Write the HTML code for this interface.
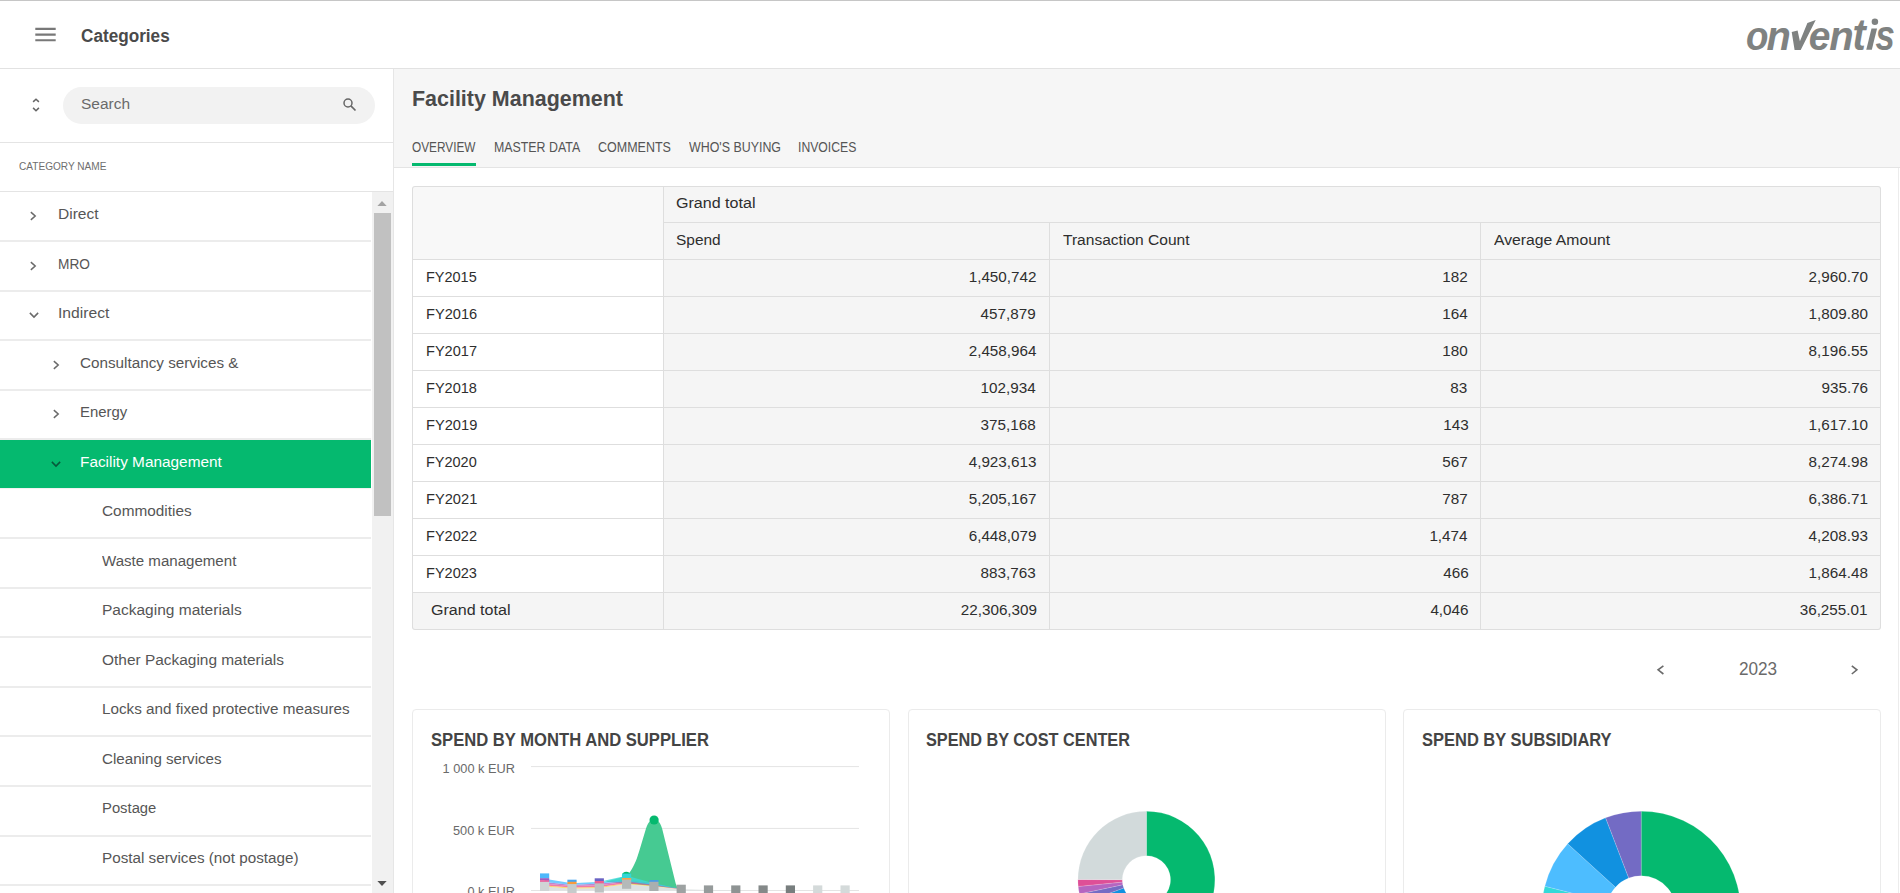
<!DOCTYPE html>
<html lang="en">
<head>
<meta charset="utf-8">
<title>Categories - Facility Management</title>
<style>
html,body{margin:0;padding:0;width:1900px;height:893px;overflow:hidden;background:#fff;}
#app{position:absolute;left:0;top:0;width:1900px;height:893px;overflow:hidden;background:#fff;font-family:"Liberation Sans",sans-serif;}
.a{position:absolute;}
.t{position:absolute;white-space:nowrap;line-height:1;display:block;}
.hl{position:absolute;height:1px;background:#e4e4e4;}
.vl{position:absolute;width:1px;background:#e4e4e4;}
.sep{position:absolute;left:0;width:371px;height:2px;background:#ececec;}
.cell{position:absolute;background:#f5f5f5;}
.card{position:absolute;top:709px;height:200px;border:1px solid #ebebeb;border-radius:4px;background:#fff;box-sizing:border-box;}
svg{position:absolute;overflow:visible;}
</style>
</head>
<body>
<div id="app">
<!-- top window line -->
<div class="a" style="left:0;top:0;width:1900px;height:1px;background:#c6c6c6;"></div>
<!-- header -->
<div class="hl" style="left:0;top:68px;width:1900px;background:#e2e2e2;"></div>
<svg style="left:35px;top:26px;" width="22" height="18" viewBox="0 0 22 18"><path d="M0.3 1.8 H20.7 V3.9 H0.3 Z M0.3 7.6 H20.7 V9.7 H0.3 Z M0.3 13.2 H20.7 V15.3 H0.3 Z" fill="#787878"/></svg>

<!-- sidebar -->
<div class="vl" style="left:393px;top:69px;height:824px;background:#e6e6e6;"></div>
<div class="hl" style="left:0;top:142px;width:393px;"></div>
<div class="a" style="left:63px;top:87px;width:312px;height:37px;border-radius:18.5px;background:#f2f2f2;"></div>
<svg style="left:30px;top:96px;" width="12" height="18" viewBox="0 0 12 18"><path d="M3.1 5.9 L6 3.2 L8.9 5.9 M3.1 11.9 L6 14.8 L8.9 11.9" fill="none" stroke="#666" stroke-width="1.5"/></svg>
<svg style="left:341px;top:96px;" width="18" height="18" viewBox="0 0 18 18"><circle cx="7.0" cy="7.0" r="4.0" fill="none" stroke="#666" stroke-width="1.5"/><path d="M9.9 9.9 L14.5 14.5" stroke="#666" stroke-width="1.7" fill="none"/></svg>
<div class="hl" style="left:0;top:191px;width:393px;"></div>
<!-- selected row -->
<div class="a" style="left:0;top:440px;width:371px;height:48px;background:#05b96f;"></div>
<!-- scrollbar -->
<div class="a" style="left:372px;top:192px;width:21px;height:701px;background:#f1f1f1;"></div>
<div class="a" style="left:374px;top:213px;width:17px;height:303px;background:#c1c1c1;"></div>
<svg style="left:376.4px;top:199px;" width="12" height="8" viewBox="0 0 12 8"><path d="M1.4 7 L6 2 L10.7 7 Z" fill="#a3a3a3"/></svg>
<svg style="left:376.4px;top:879px;" width="12" height="8" viewBox="0 0 12 8"><path d="M1.4 2 L6 7.1 L10.7 2 Z" fill="#505050"/></svg>

<!-- main header -->
<div class="a" style="left:394px;top:69px;width:1506px;height:98px;background:#f6f6f6;"></div>
<div class="hl" style="left:394px;top:167px;width:1506px;background:#e4e4e4;"></div>
<div class="a" style="left:412px;top:163px;width:64px;height:3px;background:#05b96f;"></div>

<!-- right edge line -->
<div class="vl" style="left:1898px;top:168px;height:725px;background:#ececec;"></div>
<!-- table -->
<div class="a" style="left:412px;top:186px;width:1469px;height:444px;border-radius:3px;background:#dedede;"></div>
<div class="cell" style="left:413px;top:187px;width:250px;height:72px;background:#f8f8f8;border-radius:2px 0 0 0;"></div>
<div class="cell" style="left:664px;top:187px;width:1216px;height:35px;background:#f5f5f5;border-radius:0 2px 0 0;"></div>
<div class="cell" style="left:664px;top:223px;width:385px;height:36px;background:#f5f5f5;"></div>
<div class="cell" style="left:1050px;top:223px;width:430px;height:36px;background:#f5f5f5;"></div>
<div class="cell" style="left:1481px;top:223px;width:399px;height:36px;background:#f5f5f5;"></div>
<div class="cell" style="left:413px;top:260px;width:250px;height:36px;background:#fff;"></div>
<div class="cell" style="left:664px;top:260px;width:385px;height:36px;background:#f5f5f5;"></div>
<div class="cell" style="left:1050px;top:260px;width:430px;height:36px;background:#f5f5f5;"></div>
<div class="cell" style="left:1481px;top:260px;width:399px;height:36px;background:#f5f5f5;"></div>
<div class="cell" style="left:413px;top:297px;width:250px;height:36px;background:#fff;"></div>
<div class="cell" style="left:664px;top:297px;width:385px;height:36px;background:#f5f5f5;"></div>
<div class="cell" style="left:1050px;top:297px;width:430px;height:36px;background:#f5f5f5;"></div>
<div class="cell" style="left:1481px;top:297px;width:399px;height:36px;background:#f5f5f5;"></div>
<div class="cell" style="left:413px;top:334px;width:250px;height:36px;background:#fff;"></div>
<div class="cell" style="left:664px;top:334px;width:385px;height:36px;background:#f5f5f5;"></div>
<div class="cell" style="left:1050px;top:334px;width:430px;height:36px;background:#f5f5f5;"></div>
<div class="cell" style="left:1481px;top:334px;width:399px;height:36px;background:#f5f5f5;"></div>
<div class="cell" style="left:413px;top:371px;width:250px;height:36px;background:#fff;"></div>
<div class="cell" style="left:664px;top:371px;width:385px;height:36px;background:#f5f5f5;"></div>
<div class="cell" style="left:1050px;top:371px;width:430px;height:36px;background:#f5f5f5;"></div>
<div class="cell" style="left:1481px;top:371px;width:399px;height:36px;background:#f5f5f5;"></div>
<div class="cell" style="left:413px;top:408px;width:250px;height:36px;background:#fff;"></div>
<div class="cell" style="left:664px;top:408px;width:385px;height:36px;background:#f5f5f5;"></div>
<div class="cell" style="left:1050px;top:408px;width:430px;height:36px;background:#f5f5f5;"></div>
<div class="cell" style="left:1481px;top:408px;width:399px;height:36px;background:#f5f5f5;"></div>
<div class="cell" style="left:413px;top:445px;width:250px;height:36px;background:#fff;"></div>
<div class="cell" style="left:664px;top:445px;width:385px;height:36px;background:#f5f5f5;"></div>
<div class="cell" style="left:1050px;top:445px;width:430px;height:36px;background:#f5f5f5;"></div>
<div class="cell" style="left:1481px;top:445px;width:399px;height:36px;background:#f5f5f5;"></div>
<div class="cell" style="left:413px;top:482px;width:250px;height:36px;background:#fff;"></div>
<div class="cell" style="left:664px;top:482px;width:385px;height:36px;background:#f5f5f5;"></div>
<div class="cell" style="left:1050px;top:482px;width:430px;height:36px;background:#f5f5f5;"></div>
<div class="cell" style="left:1481px;top:482px;width:399px;height:36px;background:#f5f5f5;"></div>
<div class="cell" style="left:413px;top:519px;width:250px;height:36px;background:#fff;"></div>
<div class="cell" style="left:664px;top:519px;width:385px;height:36px;background:#f5f5f5;"></div>
<div class="cell" style="left:1050px;top:519px;width:430px;height:36px;background:#f5f5f5;"></div>
<div class="cell" style="left:1481px;top:519px;width:399px;height:36px;background:#f5f5f5;"></div>
<div class="cell" style="left:413px;top:556px;width:250px;height:36px;background:#fff;"></div>
<div class="cell" style="left:664px;top:556px;width:385px;height:36px;background:#f5f5f5;"></div>
<div class="cell" style="left:1050px;top:556px;width:430px;height:36px;background:#f5f5f5;"></div>
<div class="cell" style="left:1481px;top:556px;width:399px;height:36px;background:#f5f5f5;"></div>
<div class="cell" style="left:413px;top:593px;width:250px;height:36px;background:#f5f5f5;border-radius:0 0 0 2px;"></div>
<div class="cell" style="left:664px;top:593px;width:385px;height:36px;background:#f5f5f5;"></div>
<div class="cell" style="left:1050px;top:593px;width:430px;height:36px;background:#f5f5f5;"></div>
<div class="cell" style="left:1481px;top:593px;width:399px;height:36px;background:#f5f5f5;border-radius:0 0 2px 0;"></div>
<div class="sep" style="top:240px;"></div>
<div class="sep" style="top:290px;"></div>
<div class="sep" style="top:339px;"></div>
<div class="sep" style="top:389px;"></div>
<div class="sep" style="top:438px;"></div>
<div class="sep" style="top:488px;height:1px;background:#f2f2f2;"></div>
<div class="sep" style="top:537px;"></div>
<div class="sep" style="top:587px;"></div>
<div class="sep" style="top:636px;"></div>
<div class="sep" style="top:686px;"></div>
<div class="sep" style="top:735px;"></div>
<div class="sep" style="top:785px;"></div>
<div class="sep" style="top:835px;"></div>
<div class="sep" style="top:884px;"></div>
<svg style="left:28.40px;top:209.90px;" width="10" height="12" viewBox="0 0 10 12"><path d="M2.85 2.1 L7.2 6 L2.85 9.9" fill="none" stroke="#6a6a6a" stroke-width="1.5"/></svg>
<svg style="left:28.40px;top:259.90px;" width="10" height="12" viewBox="0 0 10 12"><path d="M2.85 2.1 L7.2 6 L2.85 9.9" fill="none" stroke="#6a6a6a" stroke-width="1.5"/></svg>
<svg style="left:27.50px;top:309.60px;" width="12" height="10" viewBox="0 0 12 10"><path d="M1.85 2.9 L6 7.1 L10.15 2.9" fill="none" stroke="#6a6a6a" stroke-width="1.5"/></svg>
<svg style="left:50.50px;top:358.90px;" width="10" height="12" viewBox="0 0 10 12"><path d="M2.85 2.1 L7.2 6 L2.85 9.9" fill="none" stroke="#6a6a6a" stroke-width="1.5"/></svg>
<svg style="left:50.50px;top:407.90px;" width="10" height="12" viewBox="0 0 10 12"><path d="M2.85 2.1 L7.2 6 L2.85 9.9" fill="none" stroke="#6a6a6a" stroke-width="1.5"/></svg>
<svg style="left:49.60px;top:458.90px;" width="12" height="10" viewBox="0 0 12 10"><path d="M1.85 2.9 L6 7.1 L10.15 2.9" fill="none" stroke="#07583a" stroke-width="1.5"/></svg>
<!-- year nav -->
<svg style="left:1655px;top:663px;" width="12" height="14" viewBox="0 0 12 14"><path d="M8.4 2.8 L3.1 6.8 L8.4 11" fill="none" stroke="#6a6a6a" stroke-width="1.6"/></svg>
<svg style="left:1848px;top:663px;" width="12" height="14" viewBox="0 0 12 14"><path d="M3.8 2.8 L8.9 6.8 L3.8 11" fill="none" stroke="#6a6a6a" stroke-width="1.6"/></svg>
<!-- cards -->
<div class="card" style="left:412px;width:478px;"></div>
<div class="card" style="left:908px;width:478px;"></div>
<div class="card" style="left:1403px;width:478px;"></div>
<!-- logo -->
<svg style="left:1740px;top:0px;" width="160" height="68" viewBox="1740 0 160 68">
<g fill="#7f8281" font-family="Liberation Sans, sans-serif" font-weight="700" font-style="italic" font-size="41">
<text transform="translate(1745.90,49.79) scale(0.8958,1.0111)">o</text>
<text transform="translate(1766.40,50.00) scale(0.9712,1.0117)">n</text>
<text transform="translate(1808.83,49.84) scale(0.9512,1.0089)">e</text>
<text transform="translate(1829.20,49.75) scale(0.9756,1.0050)">n</text>
<text transform="translate(1852.46,49.81) scale(0.9718,1.0625)">t</text>
<text transform="translate(1875.48,49.83) scale(0.8452,1.0200)">s</text>
</g>
<path d="M1791.7 32.1 L1797.6 30.6 L1799.9 41.2 L1807.4 22.9 L1815.7 20.1 L1800.7 50 L1794.6 50 Z" fill="#7f8281"/>
<path d="M1866.25 49.75 L1871.8 49.75 L1877.05 28.4 L1871.5 28.4 Z" fill="#7f8281"/>
<circle cx="1874.9" cy="21.8" r="3.25" fill="#7f8281"/>
</svg>
<!-- line chart -->
<svg style="left:0;top:0;" width="1900" height="893" viewBox="0 0 1900 893">
<rect x="531" y="766.1" width="328" height="1" fill="#e4e4e4"/>
<rect x="531" y="827.9" width="328" height="1" fill="#e4e4e4"/>
<rect x="531" y="890.0" width="328" height="1" fill="#e4e4e4"/>
<path d="M605.3 881.8 L626.1 876.3 C630 873 634 866 637 858 C640 849 643 838 646 828.4 C648.5 821.5 651 819.3 654.1 819.3 C657.2 819.3 659.8 821.5 662.1 828.4 L675.7 883.4 C677 887.5 679 889.3 681.2 889.5 L681.2 889.0 L653.9 886.0 Z" fill="#46ca92"/>
<path d="M544.6 890.5 L544.6 886.4 L572.0 888.7 L599.3 888.0 L626.6 884.2 L653.9 886.4 L681.2 889.3 L708.5 890.0 L735.8 890.0 L735.8 890.5 Z" fill="#dde2e2"/>
<path d="M544.6 885.4 L572.0 887.5 L599.3 887.0 L626.6 883.2 L653.9 885.8 L681.2 889.2 L681.2 889.3 L653.9 886.4 L626.6 884.2 L599.3 888.0 L572.0 888.7 L544.6 886.4 Z" fill="#f7d154" fill-opacity="0.8"/>
<path d="M544.6 883.8 L572.0 885.9 L599.3 885.2 L626.6 881.8 L653.9 885.2 L681.2 889.1 L681.2 889.2 L653.9 885.8 L626.6 883.2 L599.3 887.0 L572.0 887.5 L544.6 885.4 Z" fill="#ef5a8e" fill-opacity="0.8"/>
<path d="M544.6 882.0 L572.0 885.1 L599.3 883.6 L626.6 881.2 L653.9 884.8 L681.2 889.1 L681.2 889.1 L653.9 885.2 L626.6 881.8 L599.3 885.2 L572.0 885.9 L544.6 883.8 Z" fill="#b565c0" fill-opacity="0.8"/>
<path d="M544.6 878.8 L572.0 883.3 L599.3 882.0 L626.6 880.4 L653.9 883.6 L681.2 889.0 L681.2 889.1 L653.9 884.8 L626.6 881.2 L599.3 883.6 L572.0 885.1 L544.6 882.0 Z" fill="#4dbdff" fill-opacity="0.8"/>
<path d="M544.6 878.8 L572.0 883.3 L599.3 881.8 L626.6 875.8 L653.9 883.2 L681.2 889.0 L681.2 889.0 L653.9 883.6 L626.6 880.4 L599.3 882.0 L572.0 883.3 L544.6 878.8 Z" fill="#3fd8d8" fill-opacity="0.8"/>
<circle cx="654.1" cy="820" r="4.6" fill="#05b96f"/>
<path d="M621.8 875.5 A4.6 4.6 0 0 1 630.8 875.5 Z" fill="#05b96f"/>
<rect x="540.0" y="873.4" width="9.2" height="5.0" fill="#4db8fb"/>
<rect x="540.0" y="878.2" width="9.2" height="2.2" fill="#9d5cc0"/>
<rect x="540.0" y="880.2" width="9.2" height="2.0" fill="#ec5b9a"/>
<rect x="567.4" y="879.7" width="9.2" height="2.3" fill="#45a6f0"/>
<rect x="567.4" y="881.8" width="9.2" height="2.6" fill="#f79a3e"/>
<rect x="594.7" y="878.3" width="9.2" height="2.9" fill="#6a63c4"/>
<rect x="594.7" y="881.0" width="9.2" height="2.9" fill="#ee5f8f"/>
<rect x="622.0" y="873.6" width="9.2" height="4.6" fill="#33d6d6"/>
<rect x="622.0" y="878.0" width="9.2" height="2.2" fill="#f7a14a"/>
<rect x="649.3" y="880.1" width="9.2" height="2.0" fill="#4a9be8"/>
<rect x="540.0" y="881.8" width="9.2" height="9.2" fill="#d0d5d5"/>
<rect x="567.4" y="884.1" width="9.2" height="9.2" fill="#c6cbcb"/>
<rect x="594.7" y="883.4" width="9.2" height="9.2" fill="#bdc2c2"/>
<rect x="622.0" y="879.6" width="9.2" height="9.2" fill="#b4b9b9"/>
<rect x="649.3" y="881.8" width="9.2" height="9.2" fill="#aaafaf"/>
<rect x="676.6" y="884.7" width="9.2" height="9.2" fill="#9da2a2"/>
<rect x="703.9" y="885.4" width="9.2" height="9.2" fill="#969b9b"/>
<rect x="731.2" y="885.4" width="9.2" height="9.2" fill="#8e9393"/>
<rect x="758.5" y="885.4" width="9.2" height="9.2" fill="#848989"/>
<rect x="785.8" y="885.4" width="9.2" height="9.2" fill="#787e7e"/>
<rect x="813.1" y="885.4" width="9.2" height="9.2" fill="#d4dada"/>
<rect x="840.5" y="885.4" width="9.2" height="9.2" fill="#d4dada"/>
</svg>
<!-- donuts -->
<svg style="left:0;top:0;" width="1900" height="893" viewBox="0 0 1900 893">
<path d="M1146.40 811.25 A68.50 68.50 0 1 1 1122.97 944.12 L1138.16 902.40 A24.10 24.10 0 1 0 1146.40 855.65 Z" fill="#05b96f" stroke="#fff" stroke-width="0.3" stroke-opacity="0.55"/>
<path d="M1122.97 944.12 A68.50 68.50 0 0 1 1088.95 917.06 L1126.19 892.88 A24.10 24.10 0 0 0 1138.16 902.40 Z" fill="#4dbdff" stroke="#fff" stroke-width="0.3" stroke-opacity="0.55"/>
<path d="M1088.95 917.06 A68.50 68.50 0 0 1 1082.03 903.18 L1123.75 887.99 A24.10 24.10 0 0 0 1126.19 892.88 Z" fill="#1191e0" stroke="#fff" stroke-width="0.3" stroke-opacity="0.55"/>
<path d="M1082.03 903.18 A68.50 68.50 0 0 1 1079.40 893.99 L1122.83 884.76 A24.10 24.10 0 0 0 1123.75 887.99 Z" fill="#756bc4" stroke="#fff" stroke-width="0.3" stroke-opacity="0.55"/>
<path d="M1079.40 893.99 A68.50 68.50 0 0 1 1078.23 886.43 L1122.42 882.10 A24.10 24.10 0 0 0 1122.83 884.76 Z" fill="#b565c0" stroke="#fff" stroke-width="0.3" stroke-opacity="0.55"/>
<path d="M1078.23 886.43 A68.50 68.50 0 0 1 1077.90 879.51 L1122.30 879.67 A24.10 24.10 0 0 0 1122.42 882.10 Z" fill="#de4f97" stroke="#fff" stroke-width="0.3" stroke-opacity="0.55"/>
<path d="M1077.90 879.51 A68.50 68.50 0 0 1 1146.40 811.25 L1146.40 855.65 A24.10 24.10 0 0 0 1122.30 879.67 Z" fill="#d2dadb" stroke="#fff" stroke-width="0.3" stroke-opacity="0.55"/>
<path d="M1641.20 811.20 A99.40 99.40 0 1 1 1607.20 1004.01 L1629.30 943.30 A34.80 34.80 0 1 0 1641.20 875.80 Z" fill="#05b96f" stroke="#fff" stroke-width="0.3" stroke-opacity="0.55"/>
<path d="M1607.20 1004.01 A99.40 99.40 0 0 1 1544.84 886.22 L1607.46 902.06 A34.80 34.80 0 0 0 1629.30 943.30 Z" fill="#33d9d8" stroke="#fff" stroke-width="0.3" stroke-opacity="0.55"/>
<path d="M1544.84 886.22 A99.40 99.40 0 0 1 1567.68 843.70 L1615.46 887.18 A34.80 34.80 0 0 0 1607.46 902.06 Z" fill="#4dbdff" stroke="#fff" stroke-width="0.3" stroke-opacity="0.55"/>
<path d="M1567.68 843.70 A99.40 99.40 0 0 1 1605.58 817.80 L1628.73 878.11 A34.80 34.80 0 0 0 1615.46 887.18 Z" fill="#1191e0" stroke="#fff" stroke-width="0.3" stroke-opacity="0.55"/>
<path d="M1605.58 817.80 A99.40 99.40 0 0 1 1641.20 811.20 L1641.20 875.80 A34.80 34.80 0 0 0 1628.73 878.11 Z" fill="#736bc4" stroke="#fff" stroke-width="0.3" stroke-opacity="0.55"/>
</svg>
<span class="t" id="t0" style="left:81.44px;transform-origin:0 0;top:28.09px;font-size:17.5px;font-weight:700;color:#4a4a4a;transform:scaleX(0.9807);">Categories</span>
<span class="t" id="t1" style="left:80.56px;transform-origin:0 0;top:95.96px;font-size:15.4px;color:#6a6a6a;transform:scaleX(1.0071);">Search</span>
<span class="t" id="t2" style="left:18.60px;transform-origin:0 0;top:160.69px;font-size:11px;color:#6e6e6e;transform:scaleX(0.9162);">CATEGORY NAME</span>
<span class="t" id="t3" style="left:57.64px;transform-origin:0 0;top:205.96px;font-size:15.4px;color:#565656;transform:scaleX(1.0098);">Direct</span>
<span class="t" id="t4" style="left:57.64px;transform-origin:0 0;top:255.96px;font-size:15.4px;color:#565656;transform:scaleX(0.8887);">MRO</span>
<span class="t" id="t5" style="left:57.64px;transform-origin:0 0;top:304.96px;font-size:15.4px;color:#565656;transform:scaleX(1.0182);">Indirect</span>
<span class="t" id="t6" style="left:79.88px;transform-origin:0 0;top:354.96px;font-size:15.4px;color:#565656;transform:scaleX(0.9907);">Consultancy services &amp;</span>
<span class="t" id="t7" style="left:79.88px;transform-origin:0 0;top:403.96px;font-size:15.4px;color:#565656;transform:scaleX(0.9691);">Energy</span>
<span class="t" id="t8" style="left:79.88px;transform-origin:0 0;top:453.96px;font-size:15.4px;color:#fff;transform:scaleX(0.9986);">Facility Management</span>
<span class="t" id="t9" style="left:101.61px;transform-origin:0 0;top:502.96px;font-size:15.4px;color:#565656;transform:scaleX(0.9981);">Commodities</span>
<span class="t" id="t10" style="left:101.61px;transform-origin:0 0;top:552.96px;font-size:15.4px;color:#565656;transform:scaleX(0.9793);">Waste management</span>
<span class="t" id="t11" style="left:101.61px;transform-origin:0 0;top:601.96px;font-size:15.4px;color:#565656;transform:scaleX(1.0079);">Packaging materials</span>
<span class="t" id="t12" style="left:101.61px;transform-origin:0 0;top:651.96px;font-size:15.4px;color:#565656;transform:scaleX(1.0029);">Other Packaging materials</span>
<span class="t" id="t13" style="left:101.61px;transform-origin:0 0;top:700.96px;font-size:15.4px;color:#565656;transform:scaleX(0.9916);">Locks and fixed protective measures</span>
<span class="t" id="t14" style="left:101.61px;transform-origin:0 0;top:750.96px;font-size:15.4px;color:#565656;transform:scaleX(0.9846);">Cleaning services</span>
<span class="t" id="t15" style="left:101.61px;transform-origin:0 0;top:799.96px;font-size:15.4px;color:#565656;transform:scaleX(0.9622);">Postage</span>
<span class="t" id="t16" style="left:101.61px;transform-origin:0 0;top:849.96px;font-size:15.4px;color:#565656;transform:scaleX(0.9904);">Postal services (not postage)</span>
<span class="t" id="t17" style="left:412.23px;transform-origin:0 0;top:87.63px;font-size:21.7px;font-weight:700;color:#4a4a4a;transform:scaleX(0.9887);">Facility Management</span>
<span class="t" id="t18" style="left:412.42px;transform-origin:0 0;top:139.65px;font-size:14px;color:#555;transform:scaleX(0.8448);">OVERVIEW</span>
<span class="t" id="t19" style="left:493.80px;transform-origin:0 0;top:139.65px;font-size:14px;color:#555;transform:scaleX(0.8838);">MASTER DATA</span>
<span class="t" id="t20" style="left:598.06px;transform-origin:0 0;top:139.65px;font-size:14px;color:#555;transform:scaleX(0.8922);">COMMENTS</span>
<span class="t" id="t21" style="left:689.10px;transform-origin:0 0;top:139.65px;font-size:14px;color:#555;transform:scaleX(0.8867);">WHO'S BUYING</span>
<span class="t" id="t22" style="left:798.46px;transform-origin:0 0;top:139.65px;font-size:14px;color:#555;transform:scaleX(0.8715);">INVOICES</span>
<span class="t" id="t23" style="left:675.85px;transform-origin:0 0;top:194.96px;font-size:15.4px;color:#2e2e2e;transform:scaleX(1.0436);">Grand total</span>
<span class="t" id="t24" style="left:675.85px;transform-origin:0 0;top:231.96px;font-size:15.4px;color:#2e2e2e;transform:scaleX(1.0040);">Spend</span>
<span class="t" id="t25" style="left:1062.70px;transform-origin:0 0;top:231.96px;font-size:15.4px;color:#2e2e2e;transform:scaleX(1.0105);">Transaction Count</span>
<span class="t" id="t26" style="left:1493.60px;transform-origin:0 0;top:231.96px;font-size:15.4px;color:#2e2e2e;transform:scaleX(1.0222);">Average Amount</span>
<span class="t" id="t27" style="left:425.57px;transform-origin:0 0;top:268.96px;font-size:15.4px;color:#2e2e2e;transform:scaleX(0.9402);">FY2015</span>
<span class="t" id="t28" style="right:863.32px;transform-origin:100% 0;top:268.96px;font-size:15.4px;color:#2e2e2e;transform:scaleX(0.9900);">1,450,742</span>
<span class="t" id="t29" style="right:432.32px;transform-origin:100% 0;top:268.96px;font-size:15.4px;color:#2e2e2e;transform:scaleX(0.9900);">182</span>
<span class="t" id="t30" style="right:32.45px;transform-origin:100% 0;top:268.96px;font-size:15.4px;color:#2e2e2e;transform:scaleX(0.9900);">2,960.70</span>
<span class="t" id="t31" style="left:425.57px;transform-origin:0 0;top:305.96px;font-size:15.4px;color:#2e2e2e;transform:scaleX(0.9499);">FY2016</span>
<span class="t" id="t32" style="right:863.88px;transform-origin:100% 0;top:305.96px;font-size:15.4px;color:#2e2e2e;transform:scaleX(0.9900);">457,879</span>
<span class="t" id="t33" style="right:432.64px;transform-origin:100% 0;top:305.96px;font-size:15.4px;color:#2e2e2e;transform:scaleX(0.9900);">164</span>
<span class="t" id="t34" style="right:32.45px;transform-origin:100% 0;top:305.96px;font-size:15.4px;color:#2e2e2e;transform:scaleX(0.9900);">1,809.80</span>
<span class="t" id="t35" style="left:425.57px;transform-origin:0 0;top:342.96px;font-size:15.4px;color:#2e2e2e;transform:scaleX(0.9456);">FY2017</span>
<span class="t" id="t36" style="right:864.01px;transform-origin:100% 0;top:342.96px;font-size:15.4px;color:#2e2e2e;transform:scaleX(0.9900);">2,458,964</span>
<span class="t" id="t37" style="right:431.84px;transform-origin:100% 0;top:342.96px;font-size:15.4px;color:#2e2e2e;transform:scaleX(0.9900);">180</span>
<span class="t" id="t38" style="right:32.26px;transform-origin:100% 0;top:342.96px;font-size:15.4px;color:#2e2e2e;transform:scaleX(0.9900);">8,196.55</span>
<span class="t" id="t39" style="left:425.57px;transform-origin:0 0;top:379.96px;font-size:15.4px;color:#2e2e2e;transform:scaleX(0.9452);">FY2018</span>
<span class="t" id="t40" style="right:864.14px;transform-origin:100% 0;top:379.96px;font-size:15.4px;color:#2e2e2e;transform:scaleX(0.9900);">102,934</span>
<span class="t" id="t41" style="right:432.63px;transform-origin:100% 0;top:379.96px;font-size:15.4px;color:#2e2e2e;transform:scaleX(0.9900);">83</span>
<span class="t" id="t42" style="right:32.14px;transform-origin:100% 0;top:379.96px;font-size:15.4px;color:#2e2e2e;transform:scaleX(0.9900);">935.76</span>
<span class="t" id="t43" style="left:425.57px;transform-origin:0 0;top:416.96px;font-size:15.4px;color:#2e2e2e;transform:scaleX(0.9521);">FY2019</span>
<span class="t" id="t44" style="right:864.01px;transform-origin:100% 0;top:416.96px;font-size:15.4px;color:#2e2e2e;transform:scaleX(0.9900);">375,168</span>
<span class="t" id="t45" style="right:431.51px;transform-origin:100% 0;top:416.96px;font-size:15.4px;color:#2e2e2e;transform:scaleX(0.9900);">143</span>
<span class="t" id="t46" style="right:32.45px;transform-origin:100% 0;top:416.96px;font-size:15.4px;color:#2e2e2e;transform:scaleX(0.9900);">1,617.10</span>
<span class="t" id="t47" style="left:425.57px;transform-origin:0 0;top:453.96px;font-size:15.4px;color:#2e2e2e;transform:scaleX(0.9412);">FY2020</span>
<span class="t" id="t48" style="right:863.39px;transform-origin:100% 0;top:453.96px;font-size:15.4px;color:#2e2e2e;transform:scaleX(0.9900);">4,923,613</span>
<span class="t" id="t49" style="right:432.32px;transform-origin:100% 0;top:453.96px;font-size:15.4px;color:#2e2e2e;transform:scaleX(0.9900);">567</span>
<span class="t" id="t50" style="right:32.14px;transform-origin:100% 0;top:453.96px;font-size:15.4px;color:#2e2e2e;transform:scaleX(0.9900);">8,274.98</span>
<span class="t" id="t51" style="left:425.57px;transform-origin:0 0;top:490.96px;font-size:15.4px;color:#2e2e2e;transform:scaleX(0.9513);">FY2021</span>
<span class="t" id="t52" style="right:863.32px;transform-origin:100% 0;top:490.96px;font-size:15.4px;color:#2e2e2e;transform:scaleX(0.9900);">5,205,167</span>
<span class="t" id="t53" style="right:432.32px;transform-origin:100% 0;top:490.96px;font-size:15.4px;color:#2e2e2e;transform:scaleX(0.9900);">787</span>
<span class="t" id="t54" style="right:31.95px;transform-origin:100% 0;top:490.96px;font-size:15.4px;color:#2e2e2e;transform:scaleX(0.9900);">6,386.71</span>
<span class="t" id="t55" style="left:425.57px;transform-origin:0 0;top:527.96px;font-size:15.4px;color:#2e2e2e;transform:scaleX(0.9456);">FY2022</span>
<span class="t" id="t56" style="right:863.39px;transform-origin:100% 0;top:527.96px;font-size:15.4px;color:#2e2e2e;transform:scaleX(0.9900);">6,448,079</span>
<span class="t" id="t57" style="right:432.51px;transform-origin:100% 0;top:527.96px;font-size:15.4px;color:#2e2e2e;transform:scaleX(0.9900);">1,474</span>
<span class="t" id="t58" style="right:32.14px;transform-origin:100% 0;top:527.96px;font-size:15.4px;color:#2e2e2e;transform:scaleX(0.9900);">4,208.93</span>
<span class="t" id="t59" style="left:425.57px;transform-origin:0 0;top:564.96px;font-size:15.4px;color:#2e2e2e;transform:scaleX(0.9452);">FY2023</span>
<span class="t" id="t60" style="right:864.01px;transform-origin:100% 0;top:564.96px;font-size:15.4px;color:#2e2e2e;transform:scaleX(0.9900);">883,763</span>
<span class="t" id="t61" style="right:431.71px;transform-origin:100% 0;top:564.96px;font-size:15.4px;color:#2e2e2e;transform:scaleX(0.9900);">466</span>
<span class="t" id="t62" style="right:32.14px;transform-origin:100% 0;top:564.96px;font-size:15.4px;color:#2e2e2e;transform:scaleX(0.9900);">1,864.48</span>
<span class="t" id="t63" style="left:431.14px;transform-origin:0 0;top:601.96px;font-size:15.4px;color:#2e2e2e;transform:scaleX(1.0436);">Grand total</span>
<span class="t" id="t64" style="right:862.95px;transform-origin:100% 0;top:601.96px;font-size:15.4px;color:#2e2e2e;transform:scaleX(0.9900);">22,306,309</span>
<span class="t" id="t65" style="right:431.95px;transform-origin:100% 0;top:601.96px;font-size:15.4px;color:#2e2e2e;transform:scaleX(0.9900);">4,046</span>
<span class="t" id="t66" style="right:32.39px;transform-origin:100% 0;top:601.96px;font-size:15.4px;color:#2e2e2e;transform:scaleX(0.9900);">36,255.01</span>
<span class="t" id="t67" style="left:1757.64px;transform-origin:0 0;top:660.93px;font-size:17.8px;color:#6a6a6a;transform:translateX(-50%) scaleX(0.9666);transform-origin:50% 0;">2023</span>
<span class="t" id="t68" style="left:430.93px;transform-origin:0 0;top:731.90px;font-size:17.6px;font-weight:700;color:#444;transform:scaleX(0.9444);">SPEND BY MONTH AND SUPPLIER</span>
<span class="t" id="t69" style="left:926.43px;transform-origin:0 0;top:731.90px;font-size:17.6px;font-weight:700;color:#444;transform:scaleX(0.9244);">SPEND BY COST CENTER</span>
<span class="t" id="t70" style="left:1422.43px;transform-origin:0 0;top:731.90px;font-size:17.6px;font-weight:700;color:#444;transform:scaleX(0.9368);">SPEND BY SUBSIDIARY</span>
<span class="t" id="t71" style="right:1384.83px;transform-origin:100% 0;top:761.66px;font-size:13.4px;color:#6a6a6a;transform:scaleX(0.9527);">1 000 k EUR</span>
<span class="t" id="t72" style="right:1385.26px;transform-origin:100% 0;top:823.66px;font-size:13.4px;color:#6a6a6a;transform:scaleX(0.9540);">500 k EUR</span>
<span class="t" id="t73" style="right:1385.15px;transform-origin:100% 0;top:884.66px;font-size:13.4px;color:#6a6a6a;transform:scaleX(0.9508);">0 k EUR</span>
</div>
</body>
</html>
